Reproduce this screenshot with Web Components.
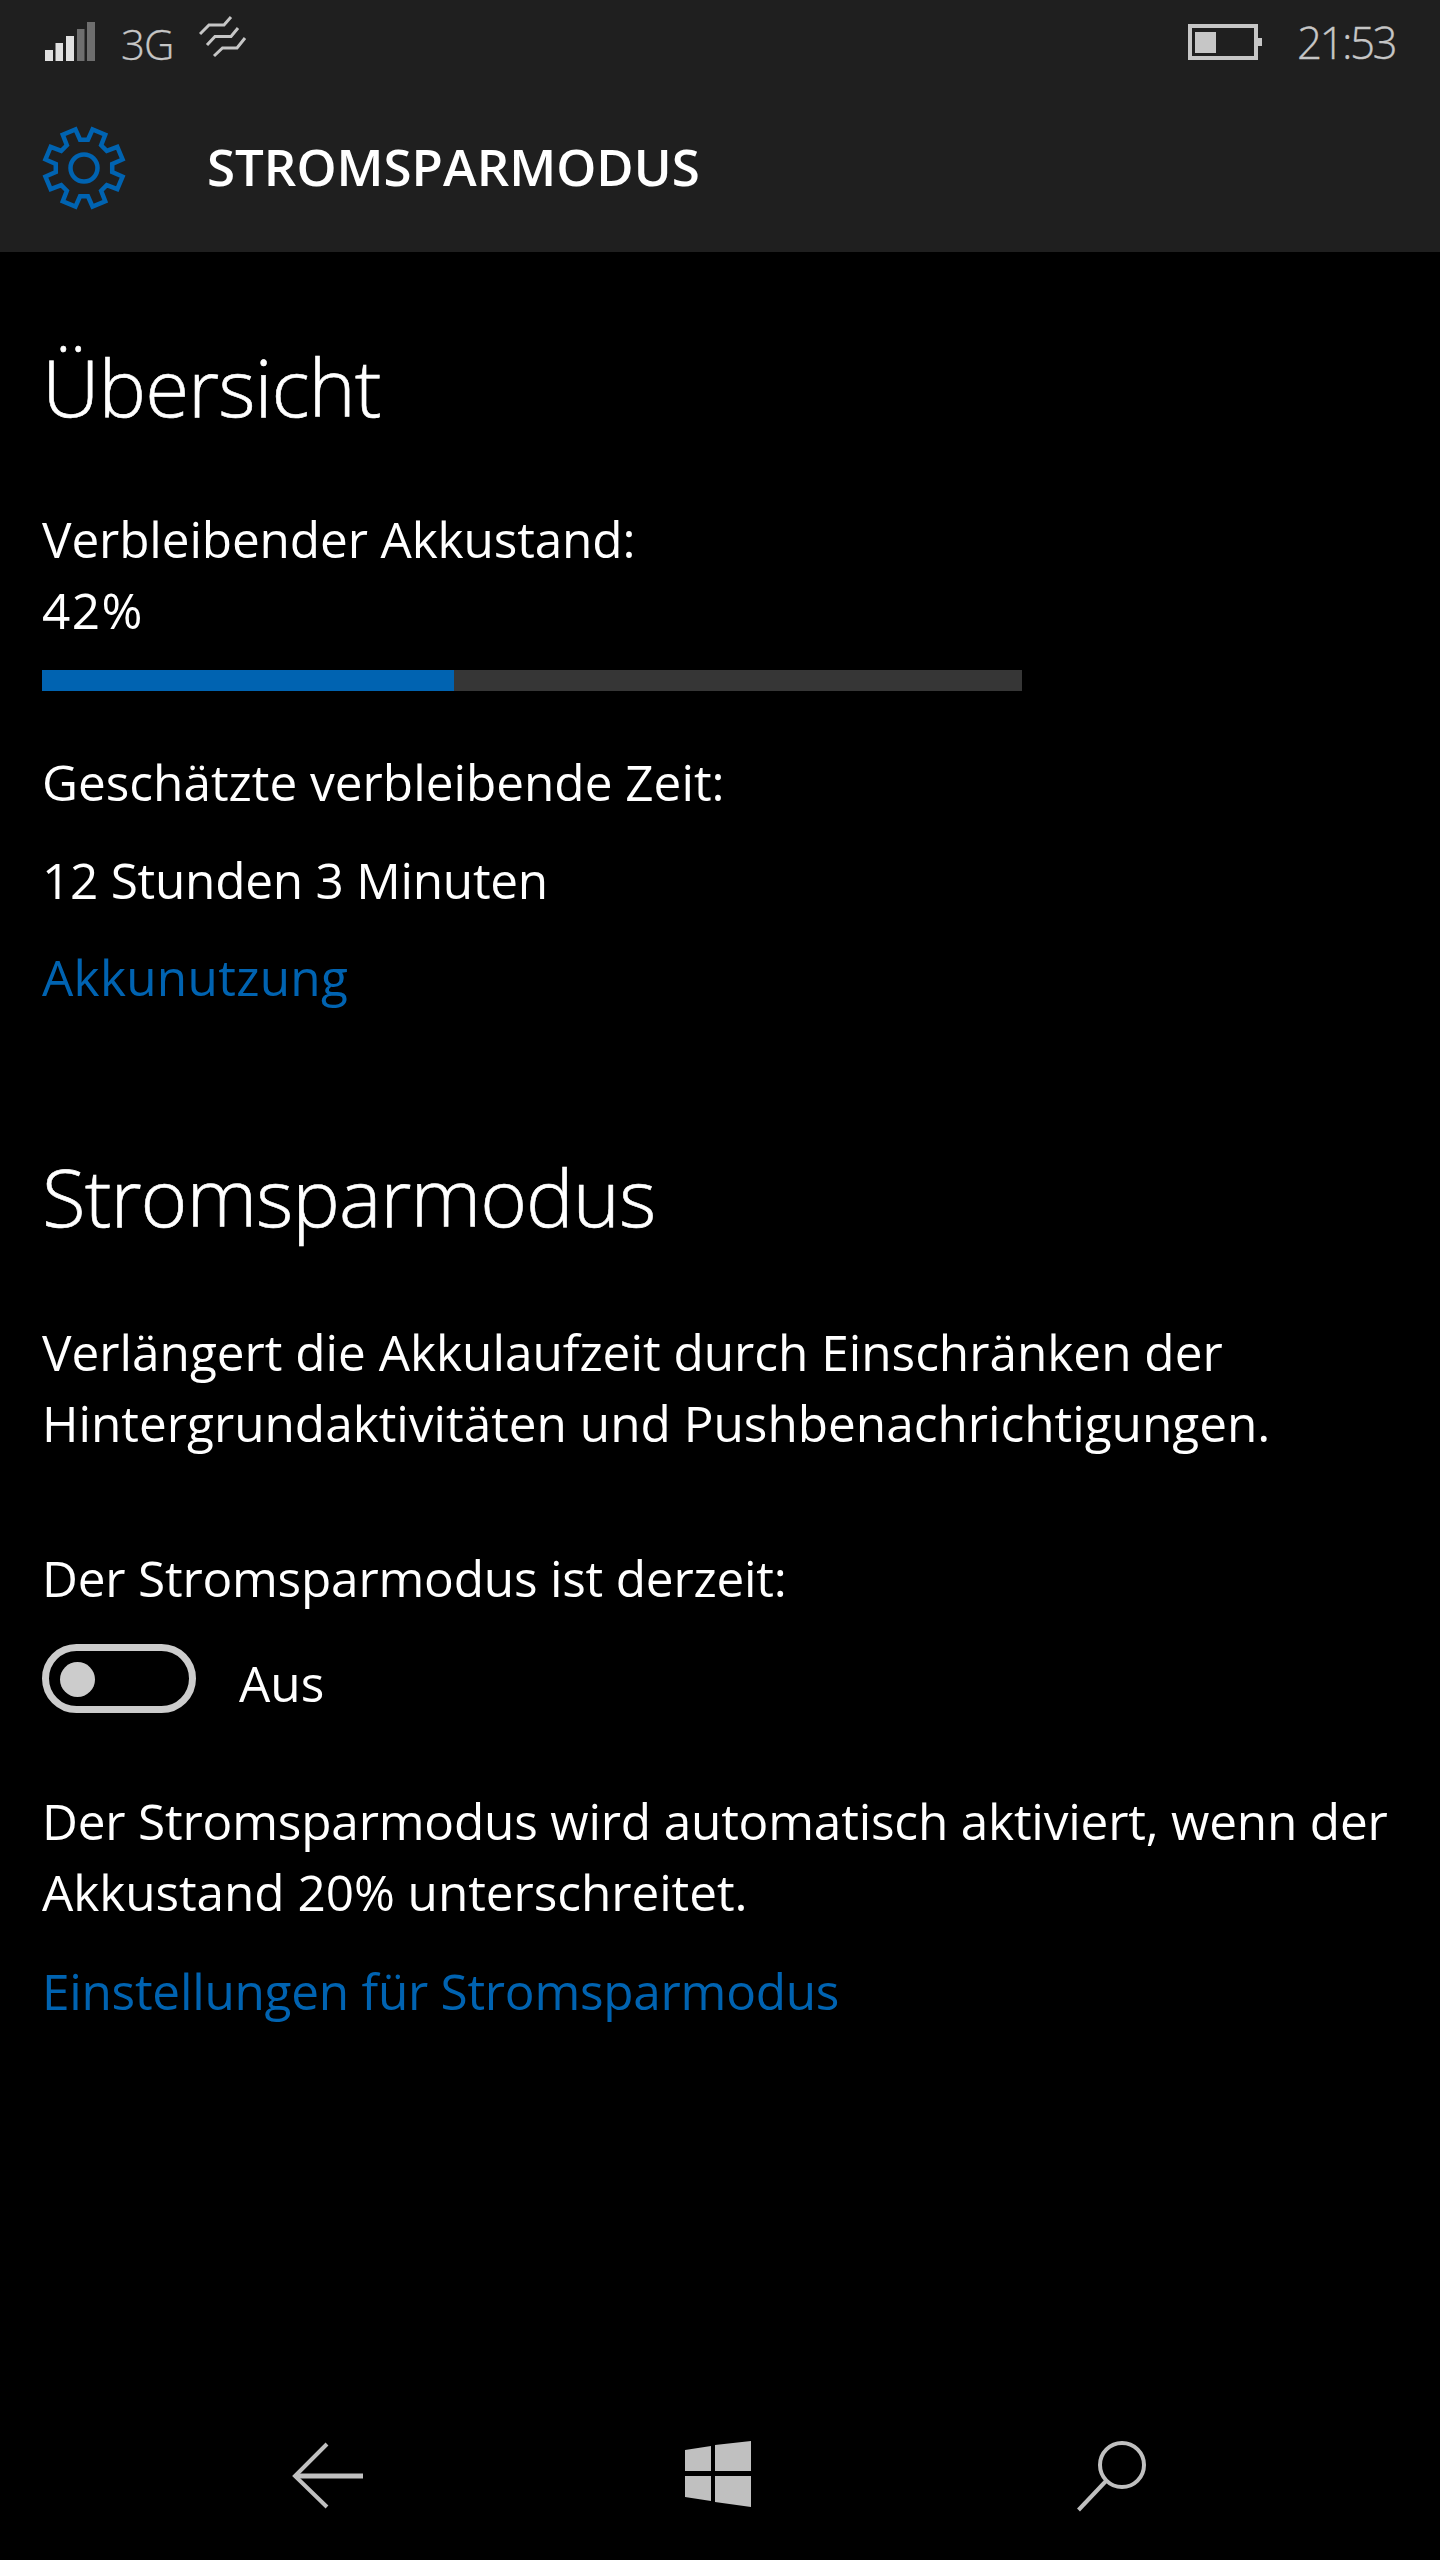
<!DOCTYPE html>
<html lang="de">
<head>
<meta charset="utf-8">
<title>Stromsparmodus</title>
<style>
html, body { margin: 0; background: #000; }
body { font-family: "Open Sans", "Noto Sans", sans-serif; color: #fff; }
.m-42 { margin-top: 24px; }
.m-time { margin-top: 56px; }
.m-next { margin-top: 27px; }
.m-use { margin-top: 26px; }
.m-heading { margin-top: 133px; }
.m-desc { margin-top: 71px; }
.m-state { margin-top: 84px; }
.m-toggle { margin-top: 30px; }
.m-auto { margin-top: 73px; }
.m-link { margin-top: 28px; }
</style>
</head>
<body>
<phone-shell>
    <status-bar slot="status"></status-bar>
    <app-header slot="header" title="STROMSPARMODUS"></app-header>

    <section-heading style="margin-top:84px">Übersicht</section-heading>
    <ui-text style="margin-top:68px"><span style="letter-spacing:-.12px">Verbleibender Akkustand:</span><br><span style="letter-spacing:1.5px">42%</span></ui-text>
    <battery-meter class="m-42" value="42"></battery-meter>
    <ui-text class="m-time">Geschätzte verbleibende Zeit:</ui-text>
    <ui-text class="m-next" style="letter-spacing:-.25px">12 Stunden 3 Minuten</ui-text>
    <ui-link class="m-use" style="letter-spacing:.3px">Akkunutzung</ui-link>

    <section-heading class="m-heading">Stromsparmodus</section-heading>
    <ui-text class="m-desc">Verlängert die Akkulaufzeit durch Einschränken der<br>Hintergrundaktivitäten und Pushbenachrichtigungen.</ui-text>
    <ui-text class="m-state" style="letter-spacing:-.2px">Der Stromsparmodus ist derzeit:</ui-text>
    <toggle-switch class="m-toggle">Aus</toggle-switch>
    <ui-text class="m-auto"><span style="letter-spacing:-.18px">Der Stromsparmodus wird automatisch aktiviert, wenn der</span><br><span style="letter-spacing:-.05px">Akkustand 20% unterschreitet.</span></ui-text>
    <ui-link class="m-link" style="letter-spacing:-.25px">Einstellungen für Stromsparmodus</ui-link>

    <nav-bar slot="nav"></nav-bar>
</phone-shell>

<script>
class PhoneShell extends HTMLElement {
    connectedCallback() {
        this.attachShadow({ mode: 'open' });
        this.shadowRoot.innerHTML = `
            <style>
                :host {
                    display: grid;
                    grid-template-rows: 252px 1fr 152px;
                    height: 2560px;
                    background: #000;
                }
                header { background: #1f1f1f; display: flex; flex-direction: column; }
                main { display: flex; flex-direction: column; padding: 0 42px; }
            </style>
            <header><slot name="status"></slot><slot name="header"></slot></header>
            <main><slot></slot></main>
            <slot name="nav"></slot>
        `;
    }
}

class StatusBar extends HTMLElement {
    connectedCallback() {
        this.attachShadow({ mode: 'open' });
        this.shadowRoot.innerHTML = `
            <style>
                :host {
                    display: flex;
                    align-items: flex-start;
                    height: 84px;
                    color: #c6c6c6;
                    font: 300 42px/1 "Open Sans", sans-serif;
                    -webkit-text-stroke: .3px #c6c6c6;
                }
                svg { display: block; flex: none; }
                .net { margin: 23px 0 0 26px; width: 54px; letter-spacing: -1px; }
                .saver { margin: 16px 0 0 24px; }
                .spacer { flex: 1; }
                .battery { margin-top: 24px; }
                .time { margin: 18px 45px 0 35px; font-size: 44px; line-height: 48px; letter-spacing: -2.6px; }
            </style>
            <svg width="50" height="40" viewBox="0 0 50 40" style="margin:22px 0 0 45px">
                <g fill="#e0e0e0">
                    <rect x="0" y="28" width="8" height="11"/>
                    <rect x="10.5" y="21" width="7.5" height="18"/>
                    <rect x="21" y="14" width="8" height="25"/>
                </g>
                <g fill="#6e6e6e">
                    <rect x="32" y="7" width="7.5" height="32"/>
                    <rect x="42" y="0" width="8" height="39"/>
                </g>
            </svg>
            <span class="net">3G</span>
            <svg class="saver" width="50" height="44" viewBox="199 18 50 44" fill="none" stroke="#c6c6c6" stroke-width="3">
                <path d="M200 36 L209 27 H224 L231 19"/>
                <path d="M207 47 L215 38.500 H231 L238 30"/>
                <path d="M214 58 L222.500 50 H237 L245 40"/>
            </svg>
            <span class="spacer"></span>
            <svg class="battery" width="74" height="36" viewBox="0 0 74 36">
                <rect x="2" y="2" width="66" height="32" fill="none" stroke="#c6c6c6" stroke-width="4"/>
                <rect x="7" y="8" width="21" height="21" fill="#c6c6c6"/>
                <rect x="70" y="14" width="4" height="8" fill="#c6c6c6"/>
            </svg>
            <span class="time">21:53</span>
        `;
    }
}

class AppHeader extends HTMLElement {
    connectedCallback() {
        this.attachShadow({ mode: 'open' });
        this.shadowRoot.innerHTML = `
            <style>
                :host { display: flex; align-items: center; height: 168px; padding-left: 42px; }
                svg { display: block; flex: none; }
                h1 {
                    margin: 0 0 3px 81px;
                    font: 600 51px/1 "Open Sans", sans-serif;
                    color: #fff;
                }
            </style>
            <svg width="84" height="84" viewBox="-42 -42 84 84" fill="none" stroke="#0063b1" stroke-width="4.500">
                <path d="${gearPath()}"/>
                <circle r="13.500"/>
            </svg>
            <h1>${this.getAttribute('title')}</h1>
        `;
    }
}

// 8 teeth, with a notch at 12 o'clock
function gearPath() {
    const pts = [];
    for (let i = 0; i < 8; i++) {
        const c = i * 45;
        [[c - 8, 28.5], [c + 8, 28.5], [c + 12.5, 39.5], [c + 32.5, 39.5]].forEach(([deg, r]) => {
            const a = deg * Math.PI / 180;
            pts.push((r * Math.sin(a)).toFixed(2) + ' ' + (-r * Math.cos(a)).toFixed(2));
        });
    }
    return 'M' + pts.join(' L') + ' Z';
}

class SectionHeading extends HTMLElement {
    connectedCallback() {
        this.attachShadow({ mode: 'open' });
        this.shadowRoot.innerHTML = `
            <style>
                :host {
                    display: block;
                    font: 300 80px/100px "Open Sans", sans-serif;
                    color: #fff;
                    letter-spacing: -1px;
                    -webkit-text-stroke: .6px #fff;
                }
            </style>
            <slot></slot>
        `;
    }
}

class UiText extends HTMLElement {
    connectedCallback() {
        this.attachShadow({ mode: 'open' });
        this.shadowRoot.innerHTML = `
            <style>
                :host { display: block; font: 400 49.500px/71px "Open Sans", sans-serif; color: #fff; white-space: nowrap; }
            </style>
            <slot></slot>
        `;
    }
}

class UiLink extends HTMLElement {
    connectedCallback() {
        this.attachShadow({ mode: 'open' });
        this.shadowRoot.innerHTML = `
            <style>
                :host { display: block; font: 400 49.500px/71px "Open Sans", sans-serif; color: #0063b1; white-space: nowrap; }
            </style>
            <slot></slot>
        `;
    }
}

class BatteryMeter extends HTMLElement {
    connectedCallback() {
        const value = Number(this.getAttribute('value')) || 0;
        this.attachShadow({ mode: 'open' });
        this.shadowRoot.innerHTML = `
            <style>
                :host { display: block; width: 980px; height: 21px; background: #363636; }
                div { height: 100%; width: ${value}%; background: #0063b1; }
            </style>
            <div></div>
        `;
    }
}

class ToggleSwitch extends HTMLElement {
    connectedCallback() {
        this.attachShadow({ mode: 'open' });
        this.shadowRoot.innerHTML = `
            <style>
                :host {
                    display: flex;
                    align-items: center;
                    font: 400 49.500px/59px "Open Sans", sans-serif;
                    color: #fff;
                }
                .track {
                    box-sizing: border-box;
                    width: 154px;
                    height: 69px;
                    border: 7px solid #ccc;
                    border-radius: 35px;
                    padding: 11px;
                    margin-right: 43px;
                }
                .knob { width: 35px; height: 35px; border-radius: 50%; background: #ccc; }
                .label { padding-top: 10px; }
            </style>
            <div class="track"><div class="knob"></div></div>
            <div class="label"><slot></slot></div>
        `;
    }
}

class NavBar extends HTMLElement {
    connectedCallback() {
        this.attachShadow({ mode: 'open' });
        this.shadowRoot.innerHTML = `
            <style>
                :host { display: block; height: 152px; }
                svg { display: block; }
            </style>
            <svg width="1440" height="152" viewBox="0 2408 1440 152">
                <g fill="none" stroke="#c0c0c0" stroke-width="4">
                    <path d="M327 2444 L295 2476 L327 2507"/>
                    <path d="M295 2476 H363" stroke-width="5"/>
                    <circle cx="1122" cy="2465" r="22"/>
                    <path d="M1106 2481 L1078.500 2510"/>
                </g>
                <g fill="#c0c0c0">
                    <path d="M685 2450 L711 2446 V2471 H685 Z"/>
                    <path d="M715 2445 L751 2441 V2471 H715 Z"/>
                    <path d="M685 2476 H711 V2501 L685 2497 Z"/>
                    <path d="M715 2476 H751 V2507 L715 2502 Z"/>
                </g>
            </svg>
        `;
    }
}

customElements.define('phone-shell', PhoneShell);
customElements.define('status-bar', StatusBar);
customElements.define('app-header', AppHeader);
customElements.define('section-heading', SectionHeading);
customElements.define('ui-text', UiText);
customElements.define('ui-link', UiLink);
customElements.define('battery-meter', BatteryMeter);
customElements.define('toggle-switch', ToggleSwitch);
customElements.define('nav-bar', NavBar);
</script>
</body>
</html>
